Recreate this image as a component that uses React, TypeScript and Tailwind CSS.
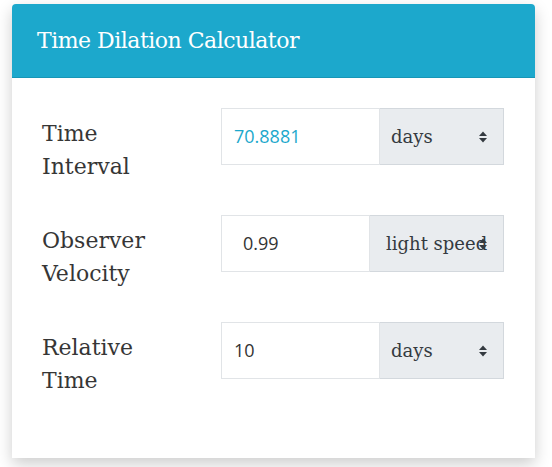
import React from 'react';

const serif = { fontFamily: '"DejaVu Serif", "Liberation Serif", serif' };
const sans = { fontFamily: '"Open Sans", "Noto Sans", sans-serif' };

const Arrows = () => (
  <svg width="10" height="12" viewBox="0 0 10 12" className="absolute right-[15px] top-1/2 -translate-y-1/2">
    <polygon points="1,5 5,0.5 9,5" fill="#343a40" />
    <polygon points="1,7 9,7 5,11.5" fill="#343a40" />
  </svg>
);

interface RowProps {
  label: string;
  value: string;
  unit: string;
  inputW: string;
  valueCls: string;
  unitPad: string;
}

const Row: React.FC<RowProps> = ({ label, value, unit, inputW, valueCls, unitPad }) => (
  <div className="flex items-start">
    <div className="w-[179px] pr-[50px] pt-[9px] text-[22px] leading-[33px] text-[#363636]" style={serif}>
      {label}
    </div>
    <div className="flex h-[57px] w-[283px]">
      <div className={`flex items-center border border-[#e1e4e7] ${inputW} ${valueCls} text-[18px]`} style={sans}>
        {value}
      </div>
      <div
        className={`relative flex flex-1 items-center overflow-hidden whitespace-nowrap border border-l-0 border-[#d3d8dd] bg-[#e9ecef] ${unitPad} text-[18px] text-[#343a40]`}
        style={serif}
      >
        {unit}
        <Arrows />
      </div>
    </div>
  </div>
);

export default function App() {
  return (
    <div className="w-[552px] h-[467px] bg-white pt-[4px] pl-[12px]">
      <div className="w-[523px] h-[454px] bg-white rounded-t-[4px] shadow-[0_6px_16px_rgba(0,0,0,0.2)]">
        <div className="h-[74px] flex items-center pl-[25px] bg-[#1ca8cc] border-b border-[#1796b6] rounded-t-[4px]">
          <h1 className="text-[22px] leading-[33px] tracking-[-0.5px] text-white" style={serif}>
            Time Dilation Calculator
          </h1>
        </div>
        <div className="flex flex-col gap-[32px] px-[30px] pt-[30px]">
          <Row label="Time Interval" value="70.8881" unit="days" inputW="w-[159px]" valueCls="pl-[12px] text-[#1ca8cc]" unitPad="pl-[11px]" />
          <Row label="Observer Velocity" value="0.99" unit="light speed" inputW="w-[149px]" valueCls="pl-[21px] text-[#333]" unitPad="pl-[16px]" />
          <Row label="Relative Time" value="10" unit="days" inputW="w-[159px]" valueCls="pl-[12px] text-[#333]" unitPad="pl-[11px]" />
        </div>
      </div>
    </div>
  );
}
